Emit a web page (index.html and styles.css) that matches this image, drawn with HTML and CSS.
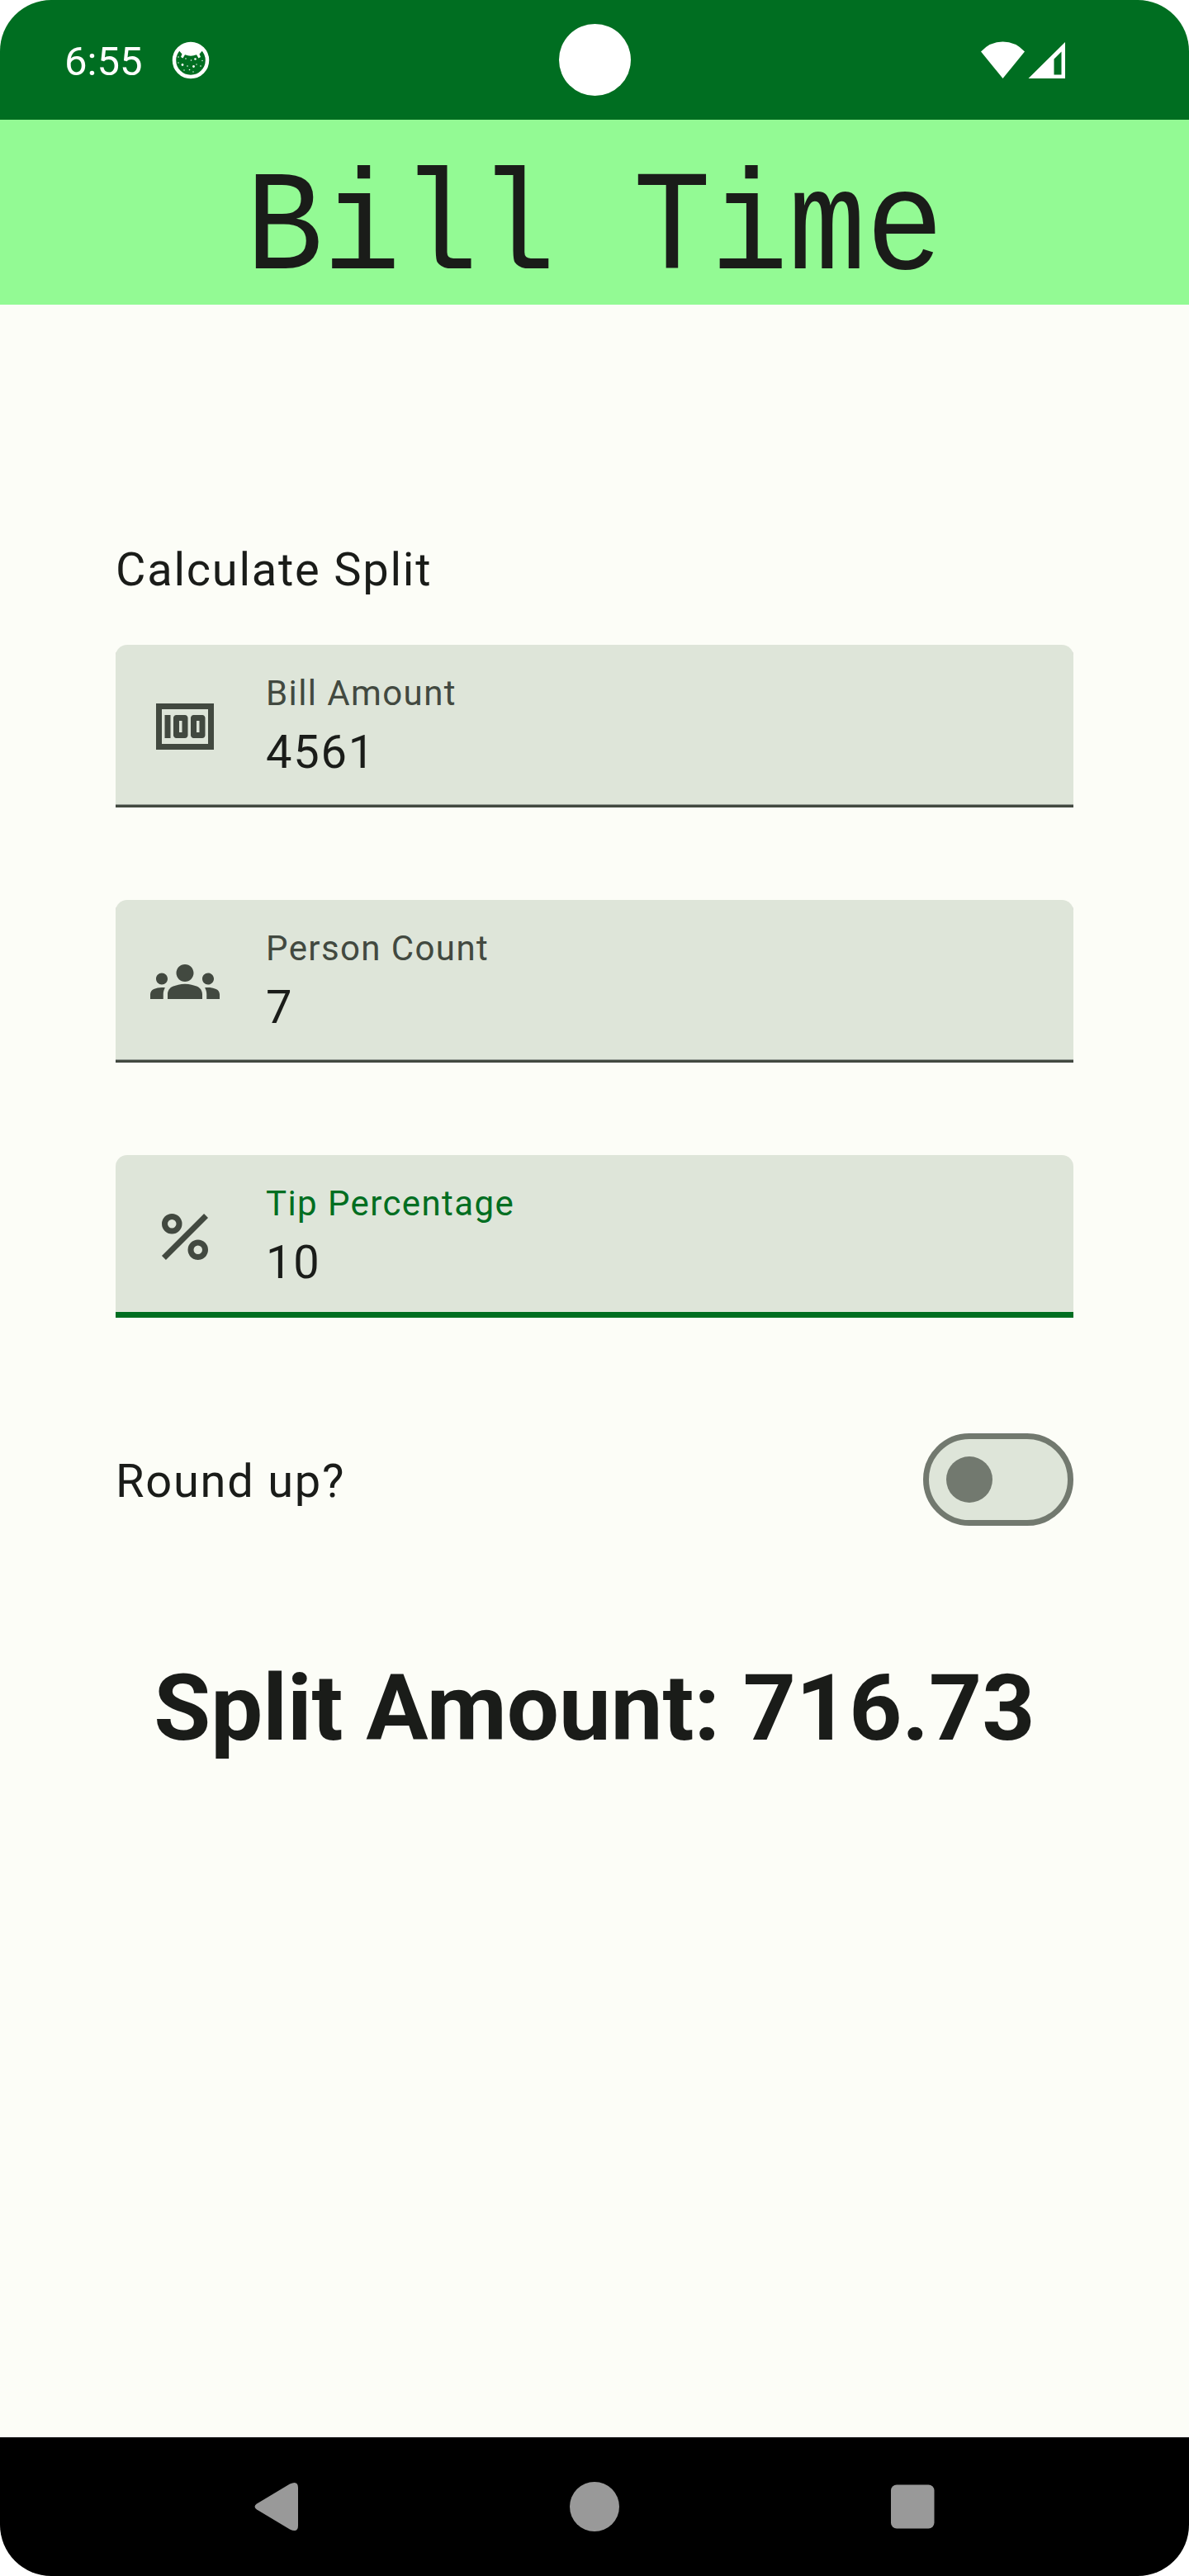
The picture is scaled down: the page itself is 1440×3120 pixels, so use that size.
FILE: index.html
```html
<!DOCTYPE html>
<html lang="en">
<head>
<meta charset="utf-8">
<title>Bill Time</title>
<link rel="stylesheet" href="styles.css">
</head>
<body>
<div class="screen">
  <div class="status-bar">
    <span class="clock">6:55</span>
    <svg class="notification" viewBox="0 0 46 46">
      <circle cx="23" cy="23" r="20" fill="none" stroke="#fff" stroke-width="4.5"/>
      <path fill="#fff" d="M7 9 Q23 -4 39 9 L37 11.500 L33.500 15.500 L35 19 L32.500 20.500 L30 16.300 Q23 19 16 16.300 L13.500 20.500 L11 19 L12.500 15.500 L9 11.500Z"/>
      <g fill="#fff"><circle cx="28.500" cy="21.500" r="1.300"/><circle cx="13" cy="28.500" r="1.400"/><circle cx="26.500" cy="30.500" r="1.400"/><circle cx="17" cy="21" r=".8"/><circle cx="23.500" cy="23" r=".8"/><circle cx="8" cy="19" r=".8"/><circle cx="8" cy="26" r=".7"/><circle cx="19" cy="30" r=".8"/><circle cx="30" cy="28" r=".7"/><circle cx="35" cy="30" r=".8"/><circle cx="37" cy="23.500" r=".7"/><circle cx="15" cy="35" r=".7"/><circle cx="21.500" cy="34.500" r=".8"/><circle cx="26" cy="37" r=".7"/></g>
    </svg>
    <span class="camera"></span>
    <svg class="signals" viewBox="0 0 104 46">
      <path fill="#fff" d="M0 12.500 Q11 .5 26.500 .5 T53 12.500 L26.500 45Z"/>
      <path fill="#fff" fill-rule="evenodd" d="M102 1 V45 H57.500Z M97.500 12.500 L88.500 21.500 V40.500 H97.500Z"/>
    </svg>
  </div>
  <header class="app-bar"><h1 class="title">Bill Time</h1></header>
  <main class="content">
    <p class="heading">Calculate Split</p>
    <div class="fields">
      <div class="field">
        <svg class="icon" viewBox="0 0 24 24"><path d="M15 16h3c.55 0 1-.45 1-1V9c0-.55-.45-1-1-1h-3c-.55 0-1 .45-1 1v6c0 .55.45 1 1 1zm1-6h1v4h-1v-4zm-7 6h3c.55 0 1-.45 1-1V9c0-.55-.45-1-1-1H9c-.55 0-1 .45-1 1v6c0 .55.45 1 1 1zm1-6h1v4h-1v-4zM5 8h2v8H5V8zM2 4v16h20V4H2zm18 14H4V6h16v12z"/></svg>
        <div class="field-text"><span class="label">Bill Amount</span><span class="value">4561</span></div>
      </div>
      <div class="field">
        <svg class="icon" viewBox="0 0 24 24"><path d="M12 12.750c1.630 0 3.070.39 4.240.9 1.080.48 1.760 1.560 1.760 2.730V18H6v-1.610c0-1.180.68-2.260 1.760-2.730 1.170-.52 2.610-.91 4.240-.91zM4 13c1.100 0 2-.9 2-2s-.9-2-2-2-2 .9-2 2 .9 2 2 2zm1.130 1.100c-.37-.06-.74-.1-1.130-.1-.99 0-1.930.21-2.780.58C.48 14.900 0 15.620 0 16.430V18h4.500v-1.610c0-.83.23-1.610.63-2.290zM20 13c1.100 0 2-.9 2-2s-.9-2-2-2-2 .9-2 2 .9 2 2 2zm4 3.430c0-.81-.48-1.530-1.220-1.850-.85-.37-1.790-.58-2.780-.58-.39 0-.76.04-1.130.1.4.68.63 1.460.63 2.290V18H24v-1.570zM12 6c1.660 0 3 1.340 3 3s-1.340 3-3 3-3-1.340-3-3 1.340-3 3-3z"/></svg>
        <div class="field-text"><span class="label">Person Count</span><span class="value">7</span></div>
      </div>
      <div class="field focused">
        <svg class="icon line" viewBox="0 0 24 24"><circle cx="7.500" cy="7.500" r="2.500"/><circle cx="16.500" cy="16.500" r="2.500"/><path d="M4.700 19.300L19.300 4.700"/></svg>
        <div class="field-text"><span class="label">Tip Percentage</span><span class="value">10</span></div>
      </div>
    </div>
    <div class="round-row"><span class="round-label">Round up?</span><span class="switch"><span class="thumb"></span></span></div>
    <p class="result">Split Amount: 716.73</p>
  </main>
  <nav class="nav-bar">
    <svg class="nav-icons" viewBox="0 0 824 60">
      <path d="M3 26.500 L43 2.500 Q53 -2 53 7 V53 Q53 62 43 57.500 L3 33.500 Q-2 30 3 26.500Z"/>
      <circle cx="412" cy="30" r="30"/>
      <rect x="771" y="3.500" width="52.500" height="53" rx="7"/>
    </svg>
  </nav>
</div>
</body>
</html>
```
FILE: styles.css
```css
* { box-sizing: border-box; margin: 0; }
body { background: #fff; font-family: Roboto, "Liberation Sans", sans-serif; color: #1a1c19; }
.screen { width: 1440px; height: 3120px; display: flex; flex-direction: column; overflow: hidden; border-radius: 62px; background: #fcfdf7; }
.status-bar { position: relative; height: 145px; flex: none; display: flex; align-items: center; padding: 0 148px 0 78px; background: #006e21; color: #fff; }
.clock { font-size: 49px; line-height: 60px; padding-top: 4px; }
.notification { width: 46px; height: 46px; margin-left: 36px; }
.camera { position: absolute; left: 677px; top: 29px; width: 87px; height: 87px; border-radius: 50%; background: #fff; }
.signals { width: 104px; height: 46px; margin-left: auto; }
.app-bar { height: 224px; flex: none; display: flex; justify-content: center; padding-top: 54px; background: #93fa94; }
.title { font: 400 156.500px/170px "Liberation Mono", monospace; transform: scaleY(1.100); transform-origin: 50% 74.500%; white-space: pre; }
.content { flex: 1; display: flex; flex-direction: column; padding: 279px 140px 0; }
.heading { font-size: 56px; line-height: 84px; letter-spacing: 1.750px; }
.fields { display: flex; flex-direction: column; gap: 112px; margin-top: 49px; }
.field { height: 197px; display: flex; padding: 0 42px; background: #dee5d9; border-radius: 14px 14px 0 0; border-bottom: 3px solid #424940; box-shadow: inset 0 -1px #909790; }
.field.focused { border-bottom: 7px solid #006e21; box-shadow: none; }
.icon { width: 84px; height: 84px; margin: 57px 56px 0 0; fill: #424940; }
.icon.line { fill: none; stroke: #424940; stroke-width: 2; }
.field-text { display: flex; flex-direction: column; padding-top: 31px; }
.label { font-size: 42px; line-height: 56px; letter-spacing: 1.400px; color: #424940; }
.focused .label { color: #006e21; }
.value { font-size: 56px; line-height: 86px; letter-spacing: 1.750px; }
.round-row { display: flex; align-items: center; justify-content: space-between; height: 112px; margin-top: 140px; }
.round-label { font-size: 56px; line-height: 84px; letter-spacing: 1.750px; padding-top: 4px; }
.switch { width: 182px; height: 112px; display: flex; align-items: center; padding-left: 21px; border: 7px solid #72796f; border-radius: 56px; background: #dee5d9; }
.thumb { width: 56px; height: 56px; border-radius: 50%; background: #72796f; }
.result { margin-top: 151px; text-align: center; font-size: 112px; font-weight: 700; line-height: 140px; white-space: nowrap; }
.nav-bar { height: 168px; flex: none; display: flex; align-items: center; justify-content: center; background: #000; }
.nav-icons { width: 824px; height: 60px; fill: #999; }
```
